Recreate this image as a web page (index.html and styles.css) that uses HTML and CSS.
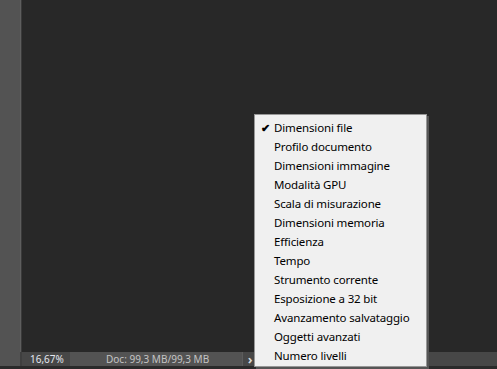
FILE: index.html
```html
<!DOCTYPE html>
<html lang="it">
<head>
    <meta charset="UTF-8">
    <meta name="viewport" content="width=device-width, initial-scale=1.0">
    <title>Barra di stato</title>
    <link rel="stylesheet" href="styles.css">
</head>
<body>
	<div class="app">
		<div class="main">
			<div class="toolbar"></div>
			<div class="divider"></div>
			<div class="canvas"></div>
		</div>
		<div class="status">
			<div class="status_gap"></div>
			<div class="zoom_box">16,67%</div>
			<div class="doc_box">Doc: 99,3 MB/99,3 MB</div>
			<div class="arrow_box">&#x203A;</div>
			<div class="status_rest"></div>
		</div>
		<div class="bottom"></div>
	</div>

	<ul class="menu">
		<li class="checked">Dimensioni file</li>
		<li>Profilo documento</li>
		<li>Dimensioni immagine</li>
		<li>Modalità GPU</li>
		<li>Scala di misurazione</li>
		<li>Dimensioni memoria</li>
		<li>Efficienza</li>
		<li>Tempo</li>
		<li>Strumento corrente</li>
		<li>Esposizione a 32 bit</li>
		<li>Avanzamento salvataggio</li>
		<li>Oggetti avanzati</li>
		<li>Numero livelli</li>
	</ul>
</body>
</html>
```

FILE: styles.css
```css
body{
	margin: 0;
	padding: 0;
	font-family: "Noto Sans", sans-serif;
	background: #282828;
	overflow: hidden;
}
.app{
	height: 369px;
	display: flex;
	flex-direction: column;
}
.main{
	flex: 1;
	display: flex;
}
.toolbar{
	width: 20px;
	background: #535353;
}
.divider{
	width: 1px;
	background: #5e5e5e;
	border-right: 1px solid #3a3a3a;
}
.canvas{
	flex: 1;
	background: #282828;
}
.status{
	height: 14px;
	display: flex;
	font-size: 10px;
	line-height: 14px;
}
.status_gap{
	width: 20px;
	background: #535353;
	border-right: 2px solid #3f3f3f;
}
.zoom_box{
	width: 40px;
	padding-left: 8px;
	background: #474747;
	color: #e4e8f0;
}
.doc_box{
	width: 172px;
	box-sizing: border-box;
	padding-left: 36px;
	background: #535353;
	color: #c4c4c4;
}
.arrow_box{
	width: 14px;
	text-align: center;
	background: #474747;
	border-left: 1px solid #5c5c5c;
	color: #d8d8d8;
	font-size: 13px;
	font-weight: bold;
}
.status_rest{
	flex: 1;
	background: #474747;
}
.bottom{
	height: 3px;
	background: #2a2a2a;
}

.menu{
	position: absolute;
	left: 254px;
	top: 114px;
	width: 171px;
	margin: 0;
	padding: 3px 0 1px 0;
	list-style: none;
	background: #f0f0f0;
	border: 1px solid #979797;
	box-shadow: 2px 2px 0 #555555;
	font-size: 11.5px;
	letter-spacing: -0.15px;
	color: #000;
}
.menu li{
	height: 19px;
	line-height: 19px;
	padding-left: 19px;
	position: relative;
}
.menu .checked::before{
	content: "\2714";
	position: absolute;
	left: 6px;
	font-size: 11px;
	font-weight: bold;
}
```
